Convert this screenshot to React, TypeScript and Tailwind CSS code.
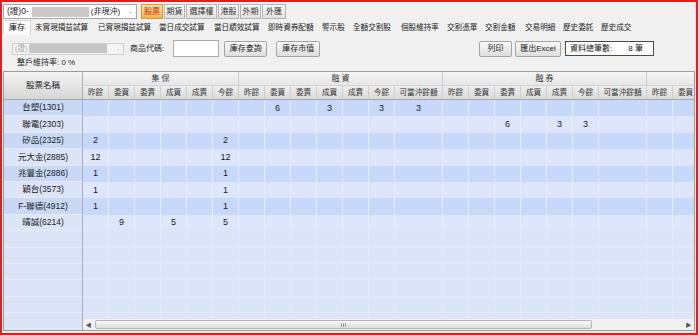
import React from "react";

const W = [26, 26, 26, 26, 26, 26, 26, 26, 26, 26, 26, 26, 48, 26, 26, 26, 26, 26, 26, 48, 26, 26, 26, 26, 26];
const LABELS = [
  "昨餘", "委買", "委賣", "成買", "成賣", "今餘",
  "昨餘", "委買", "委賣", "成買", "成賣", "今餘", "可當沖餘額",
  "昨餘", "委買", "委賣", "成買", "成賣", "今餘", "可當沖餘額",
  "昨餘", "委買", "委賣", "成買", "成賣",
];

const ROWS: { name: string; v: Record<number, string> }[] = [
  { name: "台塑(1301)", v: { 7: "6", 9: "3", 11: "3", 12: "3" } },
  { name: "聯電(2303)", v: { 15: "6", 17: "3", 18: "3" } },
  { name: "矽品(2325)", v: { 0: "2", 5: "2" } },
  { name: "元大金(2885)", v: { 0: "12", 5: "12" } },
  { name: "兆豐金(2886)", v: { 0: "1", 5: "1" } },
  { name: "穎台(3573)", v: { 0: "1", 5: "1" } },
  { name: "F-聯德(4912)", v: { 0: "1", 5: "1" } },
  { name: "晴誠(6214)", v: { 1: "9", 3: "5", 5: "5" } },
];

const MENU: { t: string; w: string }[] = [
  { t: "未實現損益試算", w: "w-[63px]" },
  { t: "已實現損益試算", w: "w-[61px]" },
  { t: "當日成交試算", w: "w-[55px]" },
  { t: "當日績效試算", w: "w-[54px]" },
  { t: "即時資券配額", w: "w-[54px]" },
  { t: "警示股", w: "w-[31px]" },
  { t: "全額交割股", w: "w-[48px]" },
  { t: "個股維持率", w: "w-[46px]" },
  { t: "交割憑單", w: "w-[38px]" },
  { t: "交割金額", w: "w-[40px]" },
  { t: "交易明細", w: "w-[38px]" },
  { t: "歷史委託", w: "w-[38px]" },
  { t: "歷史成交", w: "w-[39px]" },
];

const TABS: { t: string; w: string; active?: boolean }[] = [
  { t: "股票", w: "w-[22px]", active: true },
  { t: "期貨", w: "w-[21px]" },
  { t: "選擇權", w: "w-[31px]" },
  { t: "港股", w: "w-[21px]" },
  { t: "外期", w: "w-[21px]" },
  { t: "外匯", w: "w-[24px]" },
];

function cw(w: number) {
  return w === 48 ? "w-[48px]" : "w-[26px]";
}

function Btn({ children, w }: { children: React.ReactNode; w: string }) {
  return (
    <div
      className={`${w} h-[16px] flex items-center justify-center border border-[#a3a3a3] rounded-[2px] bg-gradient-to-b from-[#f8f8f8] to-[#dedede] text-[8px] text-[#222]`}
    >
      {children}
    </div>
  );
}

export default function App() {
  const fillRows = Array.from({ length: 7 });
  return (
    <div className="w-[698px] h-[335px] border-2 border-[#e01e1e] bg-[#f0f0f0] overflow-hidden flex flex-col font-['Liberation_Sans','Noto_Sans_CJK_TC',sans-serif] text-[#1e1e1e] leading-none">
      {/* Row 1 */}
      <div className="pt-[2px] h-[17px] flex items-stretch shrink-0">
        <div className="ml-[1px] w-[134px] h-[15px] border border-[#a6a6a6] bg-white flex items-center pl-[3px] text-[8.5px] text-[#222]">
          <span>(證)0-</span>
          <span className="ml-[3px] w-[57px] h-[10px] bg-[#c9c9c9]" />
          <span className="ml-[2px] text-[8px]">(非現沖)</span>
          <span className="ml-auto w-[11px] h-full flex items-center justify-center text-[7px] text-[#777]">-</span>
        </div>
        <div className="ml-[4px] flex gap-[1px] h-[15px]">
          {TABS.map((tb) => (
            <div
              key={tb.t}
              className={
                tb.active
                  ? `${tb.w} h-full flex items-center justify-center border border-[#e0962e] bg-gradient-to-b from-[#fde4a8] to-[#f6b04e] text-[8px] text-[#c82a00]`
                  : `${tb.w} h-full flex items-center justify-center border border-[#b5b5b5] bg-gradient-to-b from-[#fafafa] to-[#e1e1e1] text-[8px] text-[#333]`
              }
            >
              {tb.t}
            </div>
          ))}
        </div>
      </div>

      {/* Row 2 */}
      <div className="mt-[1px] h-[15px] flex items-stretch shrink-0">
        <div className="ml-[1px] w-[28px] h-full bg-[#fbfbfb] border border-[#d6d6d6] border-b-0 flex items-center justify-center text-[8px] text-[#111]">
          庫存
        </div>
        <div className="ml-[4px] flex items-center">
          {MENU.map((m) => (
            <div key={m.t} className={`${m.w} shrink-0 text-[7.6px] text-[#222] whitespace-nowrap`}>
              {m.t}
            </div>
          ))}
        </div>
      </div>

      {/* Row 3 */}
      <div className="mt-[5px] h-[17px] flex items-center shrink-0 pr-[42px]">
        <div className="ml-[10px] w-[112px] h-[12px] border border-[#cfcfcf] bg-[#f4f4f4] flex items-center pl-[2px] text-[7.5px] text-[#a8a8a8]">
          <span>(證)</span>
          <span className="ml-[1px] w-[78px] h-[9px] bg-[#c6c6c6]" />
          <span className="ml-auto mr-[4px] text-[6px] text-[#9a9a9a]">-</span>
        </div>
        <div className="ml-[6px] text-[8px] text-[#222]">商品代碼:</div>
        <div className="ml-[9px] w-[46px] h-[17px] border border-[#a9a9a9] bg-white" />
        <div className="ml-[5px]">
          <Btn w="w-[43px]">庫存查詢</Btn>
        </div>
        <div className="ml-[9px]">
          <Btn w="w-[44px]">庫存市值</Btn>
        </div>
        <div className="flex-1" />
        <Btn w="w-[33px]">列印</Btn>
        <div className="ml-[3px]">
          <Btn w="w-[46px]">匯出Excel</Btn>
        </div>
        <div className="ml-[4px] w-[89px] h-[15px] border border-[#4a4a4a] bg-white flex items-center justify-between pl-[4px] pr-[10px] text-[8px] text-[#222]">
          <span>資料總筆數:</span>
          <span>8 筆</span>
        </div>
      </div>

      {/* Row 4 */}
      <div className="h-[12px] flex items-center shrink-0 pl-[15px] text-[8px] text-[#222]">
        整戶維持率: 0 %
      </div>

      {/* Table */}
      <div className="mt-[2px] mb-[2px] mx-[1px] flex-1 min-h-0 border border-[#9c9c9c] bg-[#dce5f8] flex overflow-hidden">
        {/* Left frozen column */}
        <div className="w-[79px] shrink-0 flex flex-col border-r border-[#a9b0bd] bg-[#dbe4f6]">
          <div className="h-[28px] shrink-0 flex items-center justify-center border-b border-[#a8a8a8] bg-gradient-to-b from-[#f4f4f4] to-[#d6d6d6] text-[8.5px] text-[#222]">
            股票名稱
          </div>
          {ROWS.map((r, i) => (
            <div
              key={r.name}
              className={`h-[16.4px] shrink-0 flex items-center justify-center text-[8.5px] text-[#1a1a1a] border-b border-[#e3eaf8] ${
                i % 2 === 0 ? "bg-[#c9d9f5]" : "bg-[#dbe5f7]"
              }`}
            >
              {r.name}
            </div>
          ))}
          <div className="flex-1 min-h-0 overflow-hidden">
            {fillRows.map((_, i) => (
              <div key={i} className="h-[16.4px] border-b border-[#e4eaf7]" />
            ))}
          </div>
        </div>

        {/* Data area */}
        <div className="flex-1 min-w-0 flex flex-col overflow-hidden">
          {/* header row 1 */}
          <div className="h-[14px] shrink-0 flex bg-gradient-to-b from-[#f5f5f5] to-[#e6e6e6] border-b border-[#d4d4d4]">
            <div className="w-[156px] shrink-0 flex items-center justify-center border-r border-[#cdcdcd] text-[8px] text-[#333]">
              集 保
            </div>
            <div className="w-[204px] shrink-0 flex items-center justify-center border-r border-[#cdcdcd] text-[8px] text-[#333]">
              融 資
            </div>
            <div className="w-[204px] shrink-0 flex items-center justify-center border-r border-[#cdcdcd] text-[8px] text-[#333]">
              融 券
            </div>
            <div className="w-[130px] shrink-0" />
          </div>
          {/* header row 2 */}
          <div className="h-[14px] shrink-0 flex bg-gradient-to-b from-[#eeeeee] to-[#dadada] border-b border-[#a8a8a8]">
            {LABELS.map((l, i) => (
              <div
                key={i}
                className={`${cw(W[i])} shrink-0 flex items-center justify-center border-r border-[#cfcfcf] text-[7.6px] text-[#333] whitespace-nowrap`}
              >
                {l}
              </div>
            ))}
          </div>
          {/* data rows */}
          {ROWS.map((r, ri) => (
            <div
              key={r.name}
              className={`h-[16.4px] shrink-0 flex ${ri % 2 === 0 ? "bg-[#c8d8fa]" : "bg-[#dde6fb]"}`}
            >
              {W.map((w, ci) => (
                <div
                  key={ci}
                  className={`${cw(w)} shrink-0 flex items-center justify-center border-r border-[#e6ecfc] text-[9px] text-[#1a1a2a]`}
                >
                  {r.v[ci] ?? ""}
                </div>
              ))}
            </div>
          ))}
          {/* empty fill */}
          <div className="flex-1 min-h-0 overflow-hidden bg-[#dce4f9]">
            {fillRows.map((_, i) => (
              <div key={i} className="h-[16.4px] flex border-b border-[#e3e9fa]">
                {W.map((w, ci) => (
                  <div key={ci} className={`${cw(w)} shrink-0 border-r border-[#e3e9fa]`} />
                ))}
              </div>
            ))}
          </div>
          {/* horizontal scrollbar */}
          <div className="h-[12px] shrink-0 flex items-center bg-[#f0f0f0] border-t border-[#e0e0e0]">
            <div className="w-[11px] h-full flex items-center justify-center text-[6px] text-[#555]">◀</div>
            <div className="ml-[1px] w-[497px] h-[9px] rounded-[2px] border border-[#b5b5b5] bg-gradient-to-b from-[#f8f8f8] to-[#dedede] flex items-center justify-center">
              <div className="flex gap-[1px]">
                <span className="w-[1px] h-[4px] bg-[#9a9a9a]" />
                <span className="w-[1px] h-[4px] bg-[#9a9a9a]" />
                <span className="w-[1px] h-[4px] bg-[#9a9a9a]" />
              </div>
            </div>
            <div className="flex-1" />
            <div className="w-[11px] h-full flex items-center justify-center text-[6px] text-[#555]">▶</div>
          </div>
        </div>
      </div>
    </div>
  );
}
